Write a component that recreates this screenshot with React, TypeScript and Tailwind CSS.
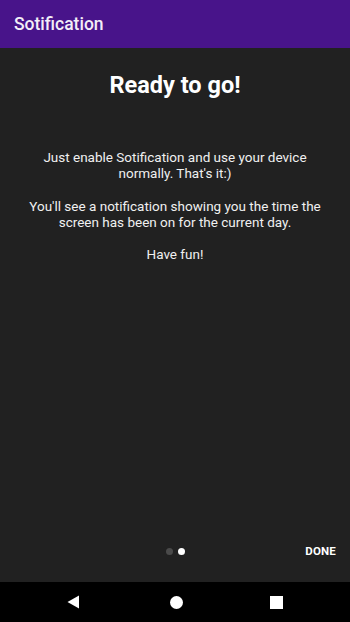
import React from "react";

const App: React.FC = () => {
  return (
    <div
      className="flex h-[622px] w-[350px] flex-col bg-[#212121] text-white"
      style={{ fontFamily: "Roboto, 'Liberation Sans', sans-serif" }}
    >
      <header className="flex h-[48px] shrink-0 items-center bg-[#48148a] px-[14px]">
        <h1 className="text-[17.5px] font-medium text-[#f3eef8]">Sotification</h1>
      </header>

      <main className="flex flex-1 flex-col items-center px-4 text-center">
        <h2 className="pt-[23px] text-[23.5px] font-bold leading-[28px]">Ready to go!</h2>
        <div className="mt-[50px] text-[13.5px] leading-[16px] text-[#f0f0f0]">
          <p>
            Just enable Sotification and use your device
            <br />
            normally. That's it:)
          </p>
          <p className="mt-[16.5px]">
            You'll see a notification showing you the time the
            <br />
            screen has been on for the current day.
          </p>
          <p className="mt-[16.5px]">Have fun!</p>
        </div>
      </main>

      <div className="relative flex h-[50px] shrink-0 items-center pb-[10px]">
        <div className="absolute left-[166px] top-[16px] flex gap-[5px]">
          <span className="h-[7px] w-[7px] rounded-full bg-[#4a4a4a]" />
          <span className="h-[7px] w-[7px] rounded-full bg-white" />
        </div>
        <span className="ml-auto mr-[14px] text-[11.5px] font-bold tracking-[0.2px]">DONE</span>
      </div>

      <nav className="flex h-[40px] shrink-0 items-center bg-black">
        <div className="flex w-full items-center">
          <div className="flex w-[146px] justify-end pr-[66px]">
            <svg width="13" height="14" viewBox="0 0 13 14">
              <path d="M12 0.5 L12 13.5 L0.5 7 Z" fill="white" />
            </svg>
          </div>
          <div className="flex w-[60px] justify-center">
            <span className="h-[13px] w-[13px] rounded-full bg-white" />
          </div>
          <div className="flex flex-1 pl-[64px]">
            <span className="h-[13px] w-[13px] bg-white" />
          </div>
        </div>
      </nav>
    </div>
  );
};

export default App;
